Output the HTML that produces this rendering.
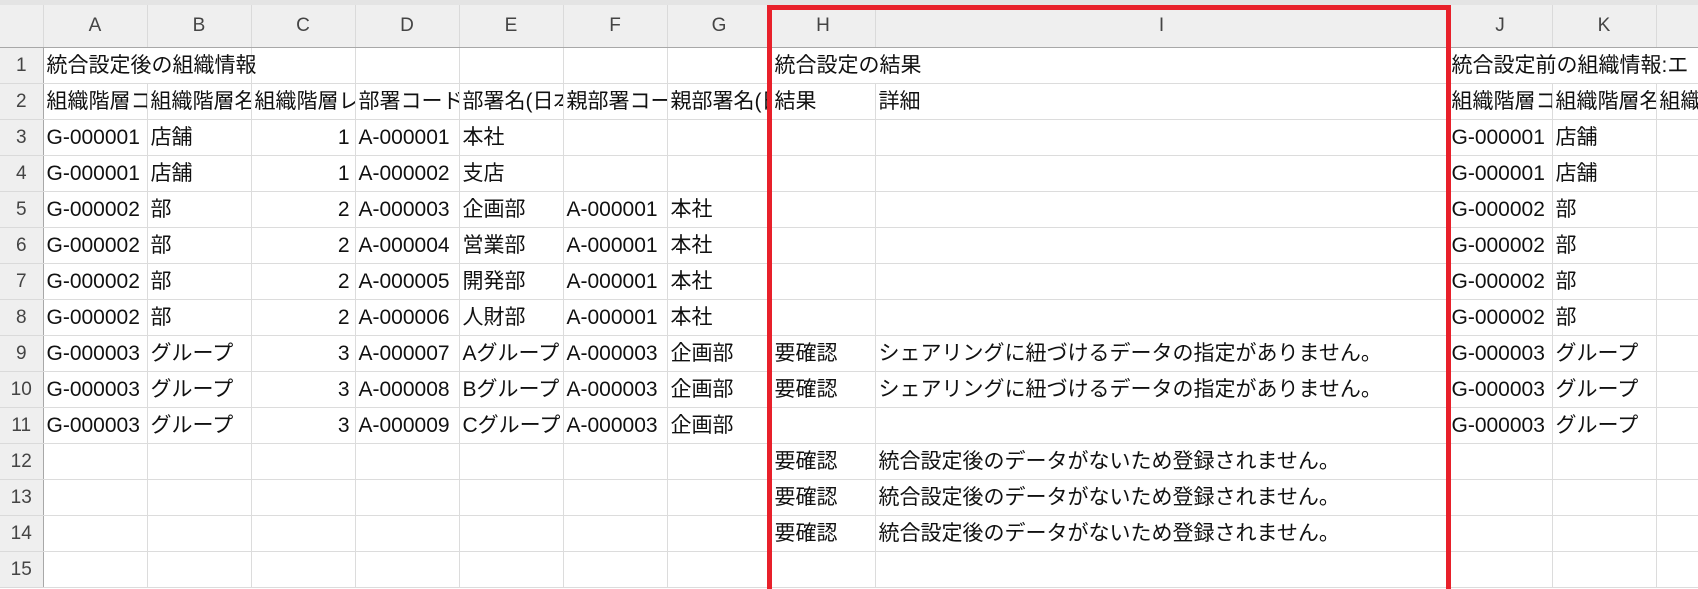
<!DOCTYPE html>
<html><head><meta charset="utf-8"><style>
html,body{margin:0;width:1698px;height:589px;overflow:hidden;background:#fff;font-family:"Liberation Sans","Noto Sans CJK JP",sans-serif;}
.top{position:absolute;left:0;top:0;width:1698px;height:5px;background:#e4e4e4;}
table{position:absolute;left:0;top:5px;border-collapse:collapse;table-layout:fixed;width:1698px;}
td{height:35px;border-right:1px solid #dcdcdc;border-bottom:1px solid #dcdcdc;padding:0 0 0 3px;font-size:21px;color:#111;white-space:nowrap;overflow:hidden;line-height:35px;box-sizing:border-box;}
td.v{overflow:visible;}
td.n{text-align:right;padding:0 5px 0 0;}
tr.h td{height:42px;background:#efefef;text-align:center;color:#444;font-size:19px;border-bottom:1px solid #a8a8a8;padding:0;border-right:1px solid #dadada;line-height:41px;}
tr:not(.h) td{height:36px;}
td.r{background:#efefef;text-align:center;color:#444;padding:0;border-right:1px solid #a8a8a8;border-bottom:1px solid #dadada;font-size:19px;}
.red{position:absolute;left:767px;top:5px;height:584px;border:5px solid #e8202a;border-bottom:0;box-sizing:border-box;width:684px;}
</style></head><body>
<div class="top"></div>
<table>
<colgroup><col style="width:43px"><col style="width:104px"><col style="width:104px"><col style="width:104px"><col style="width:104px"><col style="width:104px"><col style="width:104px"><col style="width:104px"><col style="width:104px"><col style="width:573px"><col style="width:104px"><col style="width:104px"><col style="width:42px"></colgroup>
<tr class="h"><td></td><td>A</td><td>B</td><td>C</td><td>D</td><td>E</td><td>F</td><td>G</td><td>H</td><td>I</td><td>J</td><td>K</td><td></td></tr>
<tr><td class="r">1</td><td class="v" style="border-right:none">統合設定後の組織情報</td><td></td><td></td><td></td><td></td><td></td><td></td><td class="v" style="border-right:none">統合設定の結果</td><td></td><td class="v" style="border-right:none">統合設定前の組織情報:エ</td><td style="border-right:none"></td><td></td></tr>
<tr><td class="r">2</td><td>組織階層コード</td><td>組織階層名</td><td>組織階層レベル</td><td>部署コード</td><td>部署名(日本語)</td><td>親部署コード</td><td>親部署名(日本語)</td><td>結果</td><td>詳細</td><td>組織階層コード</td><td>組織階層名</td><td>組織</td></tr>
<tr><td class="r">3</td><td>G-000001</td><td>店舗</td><td class="n">1</td><td>A-000001</td><td>本社</td><td></td><td></td><td></td><td></td><td>G-000001</td><td>店舗</td><td></td></tr>
<tr><td class="r">4</td><td>G-000001</td><td>店舗</td><td class="n">1</td><td>A-000002</td><td>支店</td><td></td><td></td><td></td><td></td><td>G-000001</td><td>店舗</td><td></td></tr>
<tr><td class="r">5</td><td>G-000002</td><td>部</td><td class="n">2</td><td>A-000003</td><td>企画部</td><td>A-000001</td><td>本社</td><td></td><td></td><td>G-000002</td><td>部</td><td></td></tr>
<tr><td class="r">6</td><td>G-000002</td><td>部</td><td class="n">2</td><td>A-000004</td><td>営業部</td><td>A-000001</td><td>本社</td><td></td><td></td><td>G-000002</td><td>部</td><td></td></tr>
<tr><td class="r">7</td><td>G-000002</td><td>部</td><td class="n">2</td><td>A-000005</td><td>開発部</td><td>A-000001</td><td>本社</td><td></td><td></td><td>G-000002</td><td>部</td><td></td></tr>
<tr><td class="r">8</td><td>G-000002</td><td>部</td><td class="n">2</td><td>A-000006</td><td>人財部</td><td>A-000001</td><td>本社</td><td></td><td></td><td>G-000002</td><td>部</td><td></td></tr>
<tr><td class="r">9</td><td>G-000003</td><td>グループ</td><td class="n">3</td><td>A-000007</td><td>Aグループ</td><td>A-000003</td><td>企画部</td><td>要確認</td><td>シェアリングに紐づけるデータの指定がありません。</td><td>G-000003</td><td>グループ</td><td></td></tr>
<tr><td class="r">10</td><td>G-000003</td><td>グループ</td><td class="n">3</td><td>A-000008</td><td>Bグループ</td><td>A-000003</td><td>企画部</td><td>要確認</td><td>シェアリングに紐づけるデータの指定がありません。</td><td>G-000003</td><td>グループ</td><td></td></tr>
<tr><td class="r">11</td><td>G-000003</td><td>グループ</td><td class="n">3</td><td>A-000009</td><td>Cグループ</td><td>A-000003</td><td>企画部</td><td></td><td></td><td>G-000003</td><td>グループ</td><td></td></tr>
<tr><td class="r">12</td><td></td><td></td><td></td><td></td><td></td><td></td><td></td><td>要確認</td><td>統合設定後のデータがないため登録されません。</td><td></td><td></td><td></td></tr>
<tr><td class="r">13</td><td></td><td></td><td></td><td></td><td></td><td></td><td></td><td>要確認</td><td>統合設定後のデータがないため登録されません。</td><td></td><td></td><td></td></tr>
<tr><td class="r">14</td><td></td><td></td><td></td><td></td><td></td><td></td><td></td><td>要確認</td><td>統合設定後のデータがないため登録されません。</td><td></td><td></td><td></td></tr>
<tr><td class="r">15</td><td></td><td></td><td></td><td></td><td></td><td></td><td></td><td></td><td></td><td></td><td></td><td></td></tr>
</table>
<div class="red"></div>
</body></html>
